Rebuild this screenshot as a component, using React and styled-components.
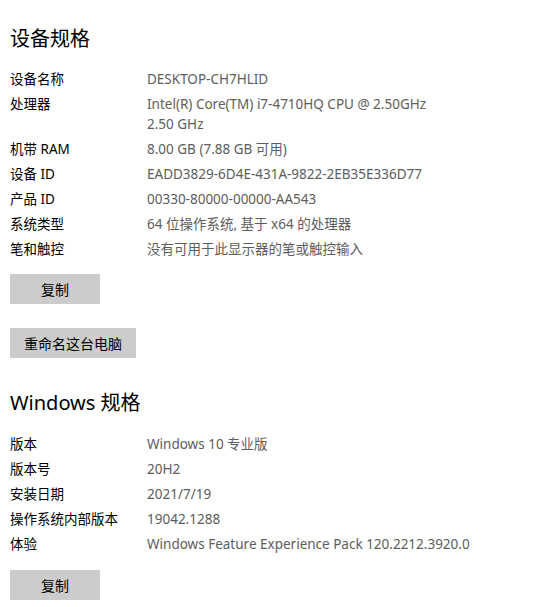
import React from 'react';
import styled, { createGlobalStyle } from 'styled-components';

const GlobalStyle = createGlobalStyle`
  body {
    margin: 0;
    background: #ffffff;
    font-family: "Noto Sans", "Noto Sans CJK SC", sans-serif;
  }
`;

const Page = styled.div`
  padding: 25px 10px 0 10px;
  display: flex;
  flex-direction: column;
`;

const Title = styled.h2`
  margin: 0;
  font-size: 20px;
  font-weight: 400;
  line-height: 28px;
  color: #000;
`;

const Specs = styled.dl`
  margin: ${(p) => (p.top ? p.top : 16)}px 0 0 0;
  display: grid;
  grid-template-columns: 137px 1fr;
  row-gap: 5px;
  font-size: 13.5px;
  line-height: 20px;
`;

const Key = styled.dt`
  margin: 0;
  color: #000;
`;

const Value = styled.dd`
  margin: 0;
  color: #5d5d5d;
  white-space: pre-line;
`;

const Button = styled.button`
  align-self: flex-start;
  margin-top: ${(p) => p.top}px;
  height: 30px;
  min-width: 90px;
  padding: 0 14px;
  border: none;
  background: #cccccc;
  color: #000;
  font-family: "Noto Sans CJK SC", sans-serif;
  font-size: 14px;
`;

const Spacer = styled.div`
  height: ${(p) => p.h}px;
`;

const device = [
  ['设备名称', 'DESKTOP-CH7HLID'],
  ['处理器', 'Intel(R) Core(TM) i7-4710HQ CPU @ 2.50GHz\n2.50 GHz'],
  ['机带 RAM', '8.00 GB (7.88 GB 可用)'],
  ['设备 ID', 'EADD3829-6D4E-431A-9822-2EB35E336D77'],
  ['产品 ID', '00330-80000-00000-AA543'],
  ['系统类型', '64 位操作系统, 基于 x64 的处理器'],
  ['笔和触控', '没有可用于此显示器的笔或触控输入'],
];

const windows = [
  ['版本', 'Windows 10 专业版'],
  ['版本号', '20H2'],
  ['安装日期', '2021/7/19'],
  ['操作系统内部版本', '19042.1288'],
  ['体验', 'Windows Feature Experience Pack 120.2212.3920.0'],
];

function SpecList({ items, top }) {
  return (
    <Specs top={top}>
      {items.map(([k, v]) => (
        <React.Fragment key={k}>
          <Key>{k}</Key>
          <Value>{v}</Value>
        </React.Fragment>
      ))}
    </Specs>
  );
}

export default function App() {
  return (
    <>
      <GlobalStyle />
      <Page>
        <Title>设备规格</Title>
        <SpecList items={device} />
        <Button top={15}>复制</Button>
        <Button top={24}>重命名这台电脑</Button>
        <Spacer h={31} />
        <Title>Windows 规格</Title>
        <SpecList items={windows} top={17} />
        <Button top={16}>复制</Button>
      </Page>
    </>
  );
}
